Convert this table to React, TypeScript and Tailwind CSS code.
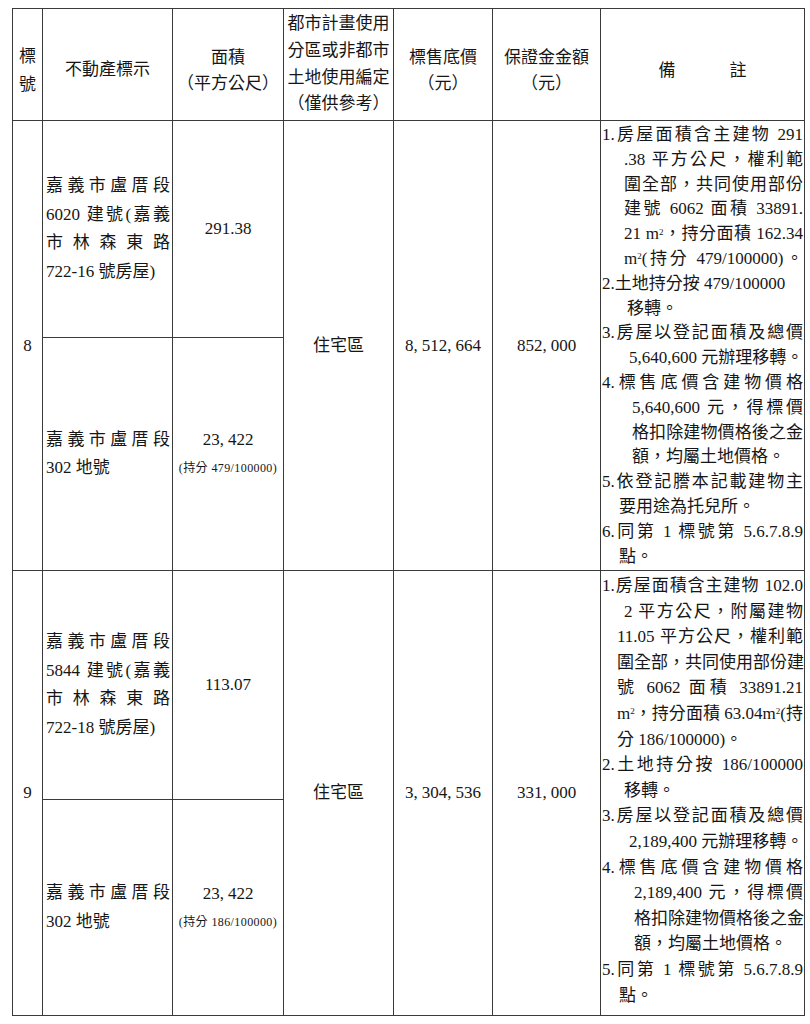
import type React from "react"

type Line = { text: React.ReactNode; cls: string }

const M2 = () => (
  <span>
    m<sup className="text-[9px]">2</sup>
  </span>
)

// numbers in the scan have a wide comma, so give it some room
function Num({ v }: { v: string }) {
  const parts = v.split(",")
  return (
    <span className="whitespace-nowrap">
      {parts.map((p, i) => (
        <span key={i}>
          {p}
          {i < parts.length - 1 && <span className="mr-[4px]">,</span>}
        </span>
      ))}
    </span>
  )
}

// remarks for lot 8
const remarks8: Line[] = [
  { text: "1.房屋面積含主建物 291", cls: "text-justify [text-align-last:justify]" },
  { text: ".38 平方公尺，權利範", cls: "pl-[22px] text-justify [text-align-last:justify]" },
  { text: "圍全部，共同使用部份", cls: "pl-[22px] text-justify [text-align-last:justify]" },
  { text: "建號 6062 面積 33891.", cls: "pl-[22px] text-justify [text-align-last:justify]" },
  { text: <>21 <M2 />，持分面積 162.34</>, cls: "pl-[22px] text-justify [text-align-last:justify]" },
  { text: <><M2 />(持分 479/100000)。</>, cls: "pl-[22px] text-justify [text-align-last:justify]" },
  { text: "2.土地持分按 479/100000", cls: "" },
  { text: "移轉。", cls: "pl-[25px]" },
  { text: "3.房屋以登記面積及總價", cls: "text-justify [text-align-last:justify]" },
  { text: "5,640,600 元辦理移轉。", cls: "pl-[27px] text-justify [text-align-last:justify]" },
  { text: "4.標售底價含建物價格", cls: "text-justify [text-align-last:justify]" },
  { text: "5,640,600 元，得標價", cls: "pl-[30px] text-justify [text-align-last:justify]" },
  { text: "格扣除建物價格後之金", cls: "pl-[30px] text-justify [text-align-last:justify]" },
  { text: "額，均屬土地價格。", cls: "pl-[30px]" },
  { text: "5.依登記謄本記載建物主", cls: "text-justify [text-align-last:justify]" },
  { text: "要用途為托兒所。", cls: "pl-[17px]" },
  { text: "6.同第 1 標號第 5.6.7.8.9", cls: "text-justify [text-align-last:justify]" },
  { text: "點。", cls: "pl-[17px]" },
]

// remarks for lot 9
const remarks9: Line[] = [
  { text: "1.房屋面積含主建物 102.0", cls: "text-justify [text-align-last:justify]" },
  { text: "2 平方公尺，附屬建物", cls: "pl-[22px] text-justify [text-align-last:justify]" },
  { text: "11.05 平方公尺，權利範", cls: "pl-[15px] text-justify [text-align-last:justify]" },
  { text: "圍全部，共同使用部份建", cls: "pl-[15px] text-justify [text-align-last:justify]" },
  { text: "號 6062 面積 33891.21", cls: "pl-[15px] text-justify [text-align-last:justify]" },
  { text: <><M2 />，持分面積 63.04<M2 />(持</>, cls: "pl-[15px] text-justify [text-align-last:justify]" },
  { text: "分 186/100000)。", cls: "pl-[15px]" },
  { text: "2.土地持分按 186/100000", cls: "text-justify [text-align-last:justify]" },
  { text: "移轉。", cls: "pl-[22px]" },
  { text: "3.房屋以登記面積及總價", cls: "text-justify [text-align-last:justify]" },
  { text: "2,189,400 元辦理移轉。", cls: "pl-[27px] text-justify [text-align-last:justify]" },
  { text: "4.標售底價含建物價格", cls: "text-justify [text-align-last:justify]" },
  { text: "2,189,400 元，得標價", cls: "pl-[32px] text-justify [text-align-last:justify]" },
  { text: "格扣除建物價格後之金", cls: "pl-[32px] text-justify [text-align-last:justify]" },
  { text: "額，均屬土地價格。", cls: "pl-[32px]" },
  { text: "5.同第 1 標號第 5.6.7.8.9", cls: "text-justify [text-align-last:justify]" },
  { text: "點。", cls: "pl-[17px]" },
]

const cell = "border-r border-b border-[#3a3a3a]"

function Remarks({ lines, leading }: { lines: Line[]; leading: string }) {
  return (
    <div className={`${cell} row-span-2 overflow-hidden pl-[1px] pr-[1px] pt-[2px] ${leading}`}>
      {lines.map((l, i) => (
        <div key={i} className={`whitespace-nowrap ${l.cls}`}>
          {l.text}
        </div>
      ))}
    </div>
  )
}

function Lot({
  no,
  building,
  buildingArea,
  share,
  price,
  deposit,
  lines,
  leading,
}: {
  no: string
  building: string[]
  buildingArea: string
  share: string
  price: string
  deposit: string
  lines: Line[]
  leading: string
}) {
  return (
    <>
      <div className={`${cell} row-span-2 flex items-center justify-center`}>{no}</div>
      <div className={`${cell} flex flex-col justify-center pl-[3px] pr-[2px] leading-[28.5px]`}>
        {building.map((b, i) => (
          <div key={i} className={i === 3 ? "whitespace-nowrap" : "whitespace-nowrap text-justify [text-align-last:justify]"}>
            {b}
          </div>
        ))}
      </div>
      <div className={`${cell} flex items-center justify-center`}>{buildingArea}</div>
      <div className={`${cell} row-span-2 flex items-center justify-center`}>住宅區</div>
      <div className={`${cell} row-span-2 flex items-center justify-center`}>
        <Num v={price} />
      </div>
      <div className={`${cell} row-span-2 flex items-center justify-center`}>
        <Num v={deposit} />
      </div>
      <Remarks lines={lines} leading={leading} />
      <div className={`${cell} flex flex-col justify-center pl-[3px] pr-[2px] leading-[28.5px]`}>
        <div className="whitespace-nowrap text-justify [text-align-last:justify]">嘉義市盧厝段</div>
        <div className="whitespace-nowrap">302 地號</div>
      </div>
      <div className={`${cell} flex flex-col items-center justify-center`}>
        <div className="leading-[28px]">
          <Num v="23,422" />
        </div>
        <div className="whitespace-nowrap text-[12px] leading-[28px] tracking-[0.4px]">(持分 {share})</div>
      </div>
    </>
  )
}

export default function App() {
  return (
    <div
      lang="zh-TW"
      className="min-h-[1024px] w-[810px] bg-white pl-[12px] pt-[8px] font-['Liberation_Serif','Noto_Sans_CJK_TC',serif] text-[17px] text-[#161616]"
    >
      <div className="grid w-fit grid-cols-[30px_130px_111px_110px_99px_108px_204px] grid-rows-[112px_217px_233px_229px_216px] border-l border-t border-[#3a3a3a]">
        {/* header */}
        <div className={`${cell} flex flex-col items-center justify-center pt-[12px] leading-[28px]`}>
          <span>標</span>
          <span>號</span>
        </div>
        <div className={`${cell} flex items-center justify-center pt-[10px]`}>不動產標示</div>
        <div className={`${cell} flex flex-col items-center justify-center pt-[12px] leading-[26px]`}>
          <span>面積</span>
          <span>（平方公尺）</span>
        </div>
        <div className={`${cell} flex flex-col items-center justify-center leading-[26.7px]`}>
          <span>都市計畫使用</span>
          <span>分區或非都市</span>
          <span>土地使用編定</span>
          <span>（僅供參考）</span>
        </div>
        <div className={`${cell} flex flex-col items-center justify-center pt-[12px] leading-[26px]`}>
          <span>標售底價</span>
          <span>（元）</span>
        </div>
        <div className={`${cell} flex flex-col items-center justify-center pt-[12px] leading-[26px]`}>
          <span>保證金金額</span>
          <span>（元）</span>
        </div>
        <div className={`${cell} flex items-center justify-center gap-[54px] pt-[12px]`}>
          <span>備</span>
          <span>註</span>
        </div>

        <Lot
          no="8"
          building={["嘉義市盧厝段", "6020 建號(嘉義", "市林森東路", "722-16 號房屋)"]}
          buildingArea="291.38"
          share="479/100000"
          price="8,512,664"
          deposit="852,000"
          lines={remarks8}
          leading="leading-[24.8px]"
        />
        <Lot
          no="9"
          building={["嘉義市盧厝段", "5844 建號(嘉義", "市林森東路", "722-18 號房屋)"]}
          buildingArea="113.07"
          share="186/100000"
          price="3,304,536"
          deposit="331,000"
          lines={remarks9}
          leading="leading-[25.6px]"
        />
      </div>
    </div>
  )
}
